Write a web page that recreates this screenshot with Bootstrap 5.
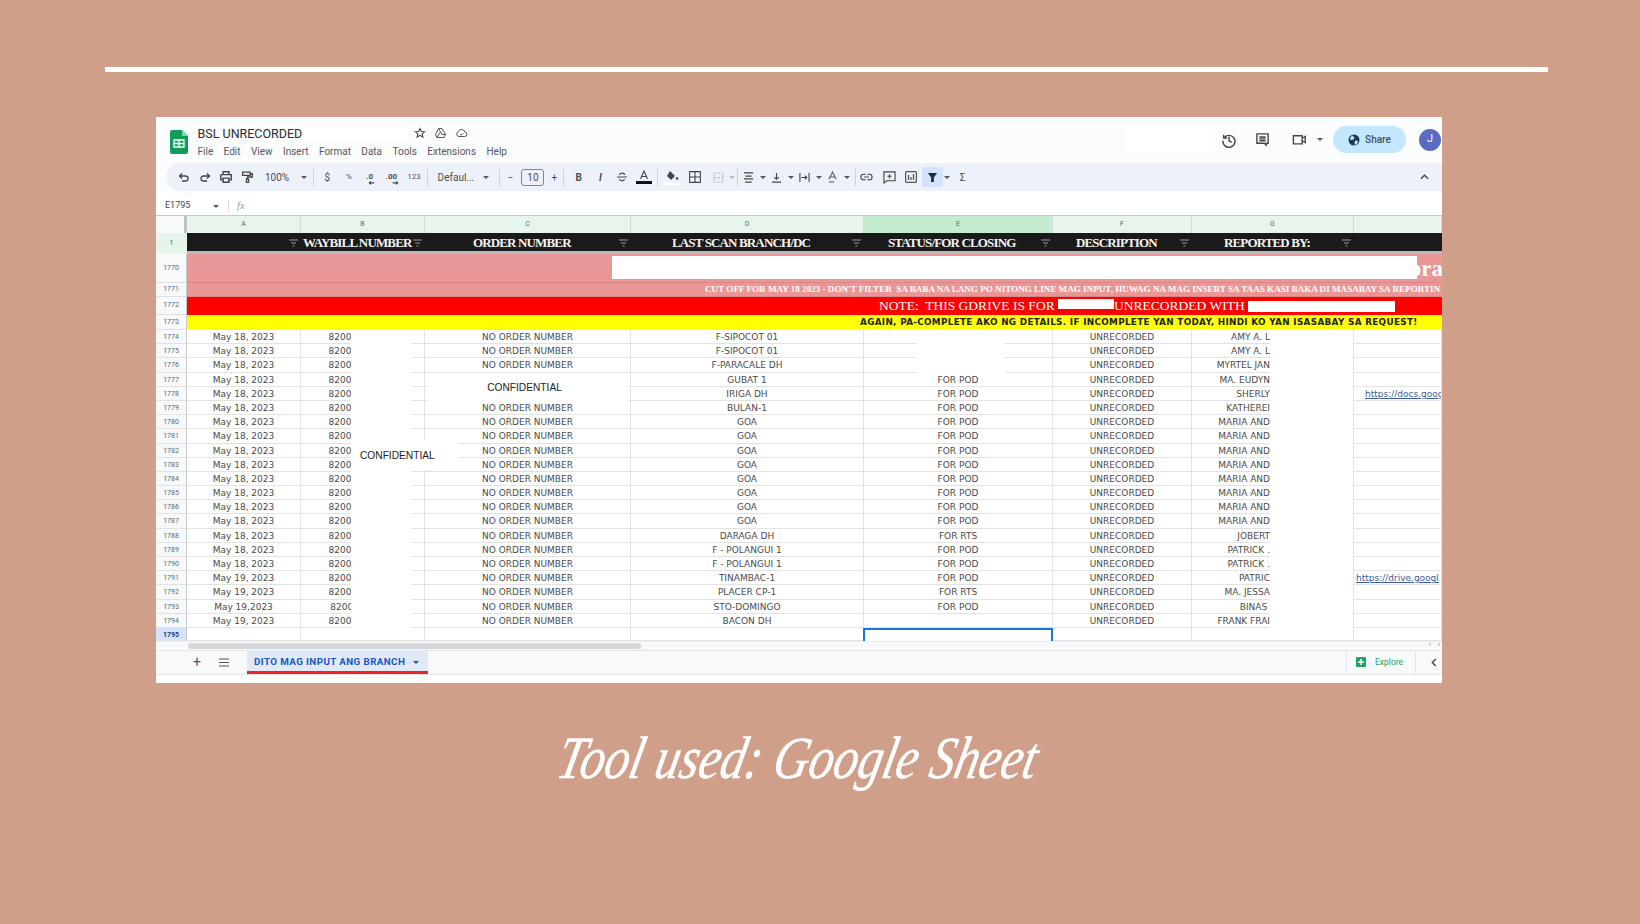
<!doctype html>
<html lang="en">
<head>
<meta charset="utf-8">
<title>Tool used: Google Sheet</title>
<link href="https://cdn.jsdelivr.net/npm/bootstrap@5.3.0/dist/css/bootstrap.min.css" rel="stylesheet">
<style>
html,body{height:100%}
body{background:#d09f89;width:1640px;height:924px;overflow:hidden;font-family:Roboto,"Liberation Sans",sans-serif;color:#3c4043}
.rule{height:5px;background:#fff;margin:67px 92px 0 105px}
.frame{width:1286px;height:566px;margin:45px 0 0 156px;background:#fff;overflow:hidden;font-size:10px}
.topbar{height:46px;background:#fafcfe;padding:13px 0 0 14px}
.logo{width:18px;height:24px;flex:none}
.titles{margin-left:9.5px;margin-top:-5px}
.doc-title{font-size:12.5px;line-height:15px;color:#2b2d30;height:16px}
.title-hide{width:106px;height:13px;background:#fff;margin-left:1px}
.star-set{gap:8px;margin-left:5px}
.menu-row{gap:10.4px;font-size:10px;line-height:14px;color:#55585c;margin-top:4px}
.top-right{margin-top:-4px}
.hide-box{width:88px;height:24px;background:#fff}
.share-pill{width:73px;height:27px;border-radius:14px;background:#c2e7ff;color:#3d5566;font-size:10px;gap:5px;font-weight:500;margin-left:11px}
.avatar-dot{width:22px;height:22px;border-radius:50%;background:#5b6ac2;color:#fff;font-size:11px;margin-left:13px;margin-right:1px;flex:none}
.toolwrap{background:#fafcfe;padding-left:10px;height:28px}
.toolpill{height:28px;background:#edf2fa;border-radius:14px 0 0 14px;padding-left:7.5px;color:#4a4d51}
.tb{flex:none;height:100%;display:flex;align-items:center;justify-content:center;white-space:nowrap}
.i{width:21.7px}
.w5{width:5px}.w6{width:6px}.w8{width:8px}.w9{width:9px}.w10{width:10px}.w11{width:11px}.w12{width:12px}.w14{width:14px}.w16{width:16px}.w17{width:17px}.w18{width:18px}.w19{width:21px}.w22{width:22px}.w23{width:23px}.w28{width:28px}.w36{width:36px}.w38{width:38px}.w39{width:39px}.w50{width:50px}
.sep::before{content:"";width:1px;height:17px;background:#cdd2d9}
.tri{width:0;height:0;border-left:3px solid transparent;border-right:3px solid transparent;border-top:3px solid #55585c;flex:none}
.tri.pale{border-top-color:#b9bcc0}
.tiny{font-size:8px;color:#55585c}
.sizebox{width:23px;height:17px;margin:0 4.5px 0 8.5px;border:1px solid #80868b;border-radius:3px;font-size:10px;flex:none}
.filter-on{width:20.5px;height:20px;background:#d3e3fd;margin-left:4.5px;border-radius:2px;flex:none}
.stack-dec{font-size:8px;font-weight:700}
.stack-dec svg{margin:8px 0 0 -5px;flex:none}
.collapse-up{margin-left:auto;margin-right:13px}
.fxbar{height:24px;background:#fff;font-size:9px;color:#444;padding-top:6px}
.cellref{width:57px;padding-left:9px}
.fx-sep{width:1px;height:12px;background:#dadce0;margin:0 8px 0 9px}
.fx-mark{font-family:"Liberation Serif",serif;font-style:italic;color:#9aa0a6;font-size:10.5px}
.sh-row{display:grid;grid-template-columns:31px 114px 124px 206px 233px 189px 139px 162px 88px}
.col-heads{height:18px;border-top:1px solid #c6c8ca;font-size:7px;color:#666;background:#e7f5ec}
.col-heads>div{display:flex;align-items:center;justify-content:center;border-right:1px solid #d4dcd7}
.col-heads>div:first-child{background:#f8f9fa;border-right:3px solid #bdc1c6}
.col-heads>div.col-active{background:#c3ecd1}
.head-row{height:21px;background:#1a1a1a;border-bottom:3px solid #b9bbbd;color:#f3f3f3;font-family:"Liberation Serif",serif;font-weight:700;font-size:13px;letter-spacing:-.86px}
.head-row>div{display:flex;align-items:center;justify-content:space-between;padding-right:3px;padding-bottom:1px;white-space:nowrap;min-width:0}
.head-row>div:first-child{background:#e6f4ea;color:#555;font:7px Roboto,sans-serif;letter-spacing:0;justify-content:center;padding:0}
.head-row>div:nth-child(2){justify-content:flex-end}
.ph2{padding-left:2px}.ph49{padding-left:48px}.ph42{padding-left:41px}.ph24{padding-left:24px}.ph23{padding-left:23px}.ph32{padding-left:32px}
.filt{width:9px;height:8px;flex:none}
.band{display:flex;overflow:hidden}
.rowno{width:31px;flex:none;background:#f8f9fa;border-right:1px solid #c8cacc;border-bottom:1px solid #e0e0e0;display:flex;align-items:center;justify-content:center;font-size:7px;color:#666}
.band-body{flex:1;min-width:0;position:relative;display:flex;align-items:center;overflow:hidden;white-space:nowrap;font-family:"Liberation Serif",serif;color:#fff}
.b1770{height:29px}.b1770 .band-body{background:#e99696;justify-content:flex-end;font-weight:700;font-size:23px;line-height:1;border-bottom:1px solid #e08585}
.b1770 .clipped-end{margin-right:-1px;padding-top:1px}
.hide-wide{position:absolute;left:425px;top:2px;width:805px;height:23px;background:#fff}
.b1771{height:14px}.b1771 .band-body{background:#e99696;padding-left:518px;font-weight:700;font-size:9.1px;border-bottom:1px solid #e08585}
.b1772{height:18px}.b1772 .band-body{background:#f00;padding-left:692px;font-size:13.5px}
.red-a{width:56px;height:10px;background:#fff;margin-top:-4px;flex:none}
.red-b{width:147px;height:11px;background:#fff;margin-left:3px;flex:none}
.b1773{height:15px}.b1773 .band-body{background:#ff0;padding-left:673px;color:#222;font:700 8.8px "DejaVu Sans",sans-serif;letter-spacing:.33px;border-bottom:1px solid #e5e5e5}
.data-wrap{position:relative;font:9px "DejaVu Sans",sans-serif;color:#4a4a4a}
.d-row{height:14.2px;line-height:14px;text-align:center;white-space:nowrap}
.d-row>div{border-right:1px solid #e3e3e3;border-bottom:1px solid #e3e3e3;min-width:0;overflow:hidden}
.d-row>div:first-child{background:#f8f9fa;font:7px/14px Roboto,sans-serif;color:#666;border-right-color:#c8cacc}
.d-row>div:nth-child(3){text-align:left;padding-left:27.5px}
.d-row>div:nth-child(8){text-align:right;padding-right:83px}
.d-row>div:nth-child(9){text-align:left;overflow:hidden}
.d-row a{color:#3c5a9a;text-decoration:underline}
.lnk-a{padding-left:11px}.lnk-b{padding-left:2px}
.blank-row{height:13px}
.blank-row>div:first-child{background:#d3e3fd;font-weight:700;color:#1b3a6b}
.sel-cell{border:2px solid #1a73e8!important;border-bottom:0!important;margin-left:-1px}
.over{position:absolute;background:#fff}
.ov-1{left:195px;top:0;width:61px;height:298px}
.ov-2{left:195px;top:110px;width:108px;height:30px;padding-left:9px}
.ov-3{left:272px;top:43px;width:200px;height:28px;padding-right:7px}
.ov-4{left:760px;top:0;width:89px;height:43px}
.ov-5{left:1114px;top:0;width:83px;height:298px}
.conf{font:10.2px "Liberation Sans",sans-serif;color:#222}
.scrolltrack{height:9px;background:#f8f9fa;padding-left:32px;border-top:1px solid #eceef0}
.thumb{width:453px;height:6px;background:#d5d7da;border-radius:3px}
.sc-arrows{margin-left:auto;gap:7px;font-size:7px;line-height:7px;color:#777;padding-right:2px}
.tabbar{height:25px;background:#f8f9fa;border-top:1px solid #e3e5e7;border-bottom:1px solid #e3e5e7}
.tab-plus{width:26px;margin-left:28px;font-size:14px;color:#555}
.tab-lines{width:28px}
.sheet-tab{width:181px;height:24px;margin-left:9px;background:#e1e9f7;border-bottom:3px solid #e8232a;color:#1a56c4;font-size:9.8px;font-weight:700;padding:3px 0 0 7px;gap:8px;letter-spacing:.4px}
.sheet-tab .tri{border-top-color:#1a56c4}
.explore{margin-left:auto;width:70px;height:100%;border-left:1px solid #e3e5e7;border-right:1px solid #e3e5e7;color:#1ea362;font-size:8.5px;gap:9px;padding-left:9px}
.side-chev{width:26px;padding-left:10px}
.bottom-strip{height:9px;background:#fff}
.caption{margin:35px 0 0 559px;color:#fff;font:italic 400 49px/80px "Liberation Serif",serif;transform:skewX(-12deg) scaleY(1.22);transform-origin:left center;white-space:nowrap;-webkit-text-stroke:.4px #fff}
</style>
</head>
<body>
<svg width="0" height="0" class="position-absolute">
  <symbol id="flt" viewBox="0 0 9 8"><path d="M0 1h9M2 4h5M3.5 7h2" stroke="#9a9a9a" stroke-width="1.1" fill="none"/></symbol>
</svg>

<div class="rule"></div>

<div class="frame">
  <div class="topbar d-flex">
    <svg class="logo" viewBox="0 0 18 24"><path d="M2 0h10l6 6v16a2 2 0 0 1-2 2H2a2 2 0 0 1-2-2V2a2 2 0 0 1 2-2z" fill="#0f9d58"/><path d="M12 0l6 6h-6z" fill="#87ceac"/><path d="M4 10h10v7H4zM4 13.5h10M9 10v7" fill="none" stroke="#fff" stroke-width="1.3"/></svg>
    <div class="titles">
      <div class="d-flex align-items-center doc-title">
        <span>BSL UNRECORDED</span><span class="title-hide"></span>
        <span class="d-flex align-items-center star-set">
          <svg width="12" height="12" viewBox="0 0 24 24" fill="none" stroke="#444" stroke-width="2.2"><path d="M12 3l2.7 6 6.3.6-4.8 4.2 1.5 6.4L12 16.8l-5.7 3.4 1.5-6.4L3 9.6 9.3 9z"/></svg>
          <svg width="13" height="12" viewBox="0 0 24 24" fill="none" stroke="#555" stroke-width="2"><path d="M8 3h7l7 12-3 6H5l-3-6zM8 3l7 12h6M5 21l6-10"/></svg>
          <svg width="13" height="12" viewBox="0 0 24 24" fill="none" stroke="#555" stroke-width="2"><path d="M7 19a5 5 0 0 1-1-9.8A6.5 6.5 0 0 1 18.5 10 4.5 4.5 0 0 1 18 19zM9 14l2.5 2.500 4-4"/></svg>
        </span>
      </div>
      <div class="d-flex menu-row"><span>File</span><span>Edit</span><span>View</span><span>Insert</span><span>Format</span><span>Data</span><span>Tools</span><span>Extensions</span><span>Help</span></div>
    </div>
    <div class="top-right ms-auto d-flex align-items-center align-self-start">
      <div class="hide-box"></div>
      <div class="tb w28"><svg width="16" height="16" viewBox="0 0 24 24" fill="none" stroke="#444" stroke-width="2.2"><path d="M4 4v5h5M4.500 9A9 9 0 1 1 3 13M12 7v6l4 2.500"/></svg></div>
      <div class="tb w38"><svg width="15" height="15" viewBox="0 0 24 24" fill="none" stroke="#444" stroke-width="2.2"><path d="M3 3h18v15h-3v3l-3-3H3zM7 8h10M7 11h10M7 14h10"/></svg></div>
      <div class="tb w36"><svg width="16" height="15" viewBox="0 0 24 24" fill="none" stroke="#444" stroke-width="2.2"><path d="M3 6h14v13H3zM17 10l5-3v10l-5-3"/></svg></div>
      <div class="tb w5"><span class="tri"></span></div>
      <div class="share-pill d-flex align-items-center justify-content-center">
        <svg width="12" height="12" viewBox="0 0 24 24"><circle cx="12" cy="12" r="11" fill="#1f3a4d"/><path d="M8 3l5 4-2 4-6 1-1-4zM14 13l6 1-2 6-5 2z" fill="#c2e7ff"/></svg>
        <span>Share</span>
      </div>
      <div class="avatar-dot d-flex align-items-center justify-content-center">J</div>
    </div>
  </div>

  <div class="toolwrap">
    <div class="toolpill d-flex align-items-center">
      <div class="tb w19"><svg width="12" height="12" viewBox="0 0 24 24" fill="none" stroke="#444" stroke-width="2.600"><path d="M8 5L3 10l5 5M3 10h12a5 5 0 0 1 0 10H8"/></svg></div>
      <div class="tb w19"><svg width="12" height="12" viewBox="0 0 24 24" fill="none" stroke="#444" stroke-width="2.600"><path d="M16 5l5 5-5 5M21 10H9a5 5 0 0 0 0 10h7"/></svg></div>
      <div class="tb w19"><svg width="14" height="14" viewBox="0 0 24 24" fill="none" stroke="#444" stroke-width="2.400"><path d="M7 8V3h10v5M3 8h18v9h-4M7 17H3V8M7 14h10v7H7z"/></svg></div>
      <div class="tb w19"><svg width="13" height="14" viewBox="0 0 24 24" fill="none" stroke="#444" stroke-width="2.400"><path d="M3 3h14v6H3zM17 6h4v6h-9v4M10 16h4v6h-4z"/></svg></div>
      <div class="tb w39">100%</div>
      <div class="tb w14"><span class="tri"></span></div>
      <div class="tb w6 sep"></div>
      <div class="tb i">$</div>
      <div class="tb i tiny">%</div>
      <div class="tb i stack-dec">.0<svg width="7" height="7" viewBox="0 0 10 10" fill="none" stroke="#444" stroke-width="1.600"><path d="M9 7H2M4 5L2 7l2 2"/></svg></div>
      <div class="tb i stack-dec">.00<svg width="7" height="7" viewBox="0 0 10 10" fill="none" stroke="#444" stroke-width="1.600"><path d="M1 7h7M6 5l2 2-2 2"/></svg></div>
      <div class="tb i tiny">123</div>
      <div class="tb w6 sep"></div>
      <div class="tb w50">Defaul...</div>
      <div class="tb w10"><span class="tri"></span></div>
      <div class="tb w17 sep"></div>
      <div class="tb w5">&minus;</div>
      <div class="sizebox d-flex align-items-center justify-content-center">10</div>
      <div class="tb w11">+</div>
      <div class="tb w8 sep"></div>
      <div class="tb i fw-bold">B</div>
      <div class="tb i fst-italic fw-bold">I</div>
      <div class="tb i"><svg width="12" height="12" viewBox="0 0 24 24" fill="none" stroke="#444" stroke-width="2.200"><path d="M2 12h20M7 8c0-5 10-5 10 0M7 16c1 5 9 5 10 0"/></svg></div>
      <div class="tb i"><svg width="16" height="14" viewBox="0 0 16 14"><path d="M4.500 9L8 1l3.500 8M5.700 6.500h4.600" fill="none" stroke="#444" stroke-width="1.100"/><rect y="11" width="16" height="3" fill="#111"/></svg></div>
      <div class="tb w6 sep"></div>
      <div class="tb w23"><svg width="16" height="15" viewBox="0 0 16 15"><path d="M6 1l5 5-4 4-4-4z" fill="#444"/><circle cx="13" cy="8.500" r="1.300" fill="#444"/><rect y="12.500" width="16" height="2.500" fill="#fff"/></svg></div>
      <div class="tb w23"><svg width="12" height="12" viewBox="0 0 12 12" fill="none" stroke="#444" stroke-width="1.100"><path d="M.6.600h10.800v10.800H.6zM6 .6v10.800M.6 6h10.800"/></svg></div>
      <div class="tb w23"><svg width="11" height="11" viewBox="0 0 12 12" fill="none" stroke="#b5b8bc" stroke-width="1.100" stroke-dasharray="2.500 1.500"><path d="M1 1h10v10H1zM1 6h10"/></svg></div>
      <div class="tb w5"><span class="tri pale"></span></div>
      <div class="tb w6 sep"></div>
      <div class="tb w16"><svg width="11" height="11" viewBox="0 0 12 12" stroke="#444" stroke-width="1.300"><path d="M1 1h10M2.500 4.500h7M1 7.500h10M2.500 11h7"/></svg></div><div class="tb w12"><span class="tri"></span></div>
      <div class="tb w16"><svg width="11" height="11" viewBox="0 0 12 12" fill="none" stroke="#444" stroke-width="1.200"><path d="M1 11h10M6 1v7M3.500 5.500L6 8l2.500-2.500"/></svg></div><div class="tb w12"><span class="tri"></span></div>
      <div class="tb w16"><svg width="11" height="11" viewBox="0 0 12 12" fill="none" stroke="#444" stroke-width="1.200"><path d="M1 1v10M11 1v10M2.500 6h6M6.500 4l2 2-2 2"/></svg></div><div class="tb w12"><span class="tri"></span></div>
      <div class="tb w16"><svg width="11" height="13" viewBox="0 0 12 14" fill="none" stroke="#555" stroke-width="1.100"><path d="M2 9L6 1l4 8M3.400 6.500h5.200M2 12h6"/></svg></div><div class="tb w12"><span class="tri"></span></div>
      <div class="tb w5 sep"></div>
      <div class="tb w18"><svg width="13" height="8" viewBox="0 0 16 10" fill="none" stroke="#444" stroke-width="1.400"><path d="M7 1.500H4.500a3.500 3.500 0 0 0 0 7H7M9 1.500h2.500a3.500 3.500 0 0 1 0 7H9M5 5h6"/></svg></div>
      <div class="tb w28"><svg width="13" height="13" viewBox="0 0 14 14" fill="none" stroke="#444" stroke-width="1.200"><path d="M1 1h12v9.500H4L1 13zM7 3.500v4.500M4.800 5.700h4.400"/></svg></div>
      <div class="tb w14"><svg width="12" height="12" viewBox="0 0 12 12"><rect x=".6" y=".6" width="10.800" height="10.800" rx="1" fill="none" stroke="#555" stroke-width="1.200"/><path d="M3.500 4v5M6 6v3M8.500 3v6" stroke="#555" stroke-width="1.300"/></svg></div>
      <div class="filter-on d-flex align-items-center justify-content-center"><svg width="11" height="11" viewBox="0 0 12 12"><path d="M1 1h10L7.500 6v5h-3V6z" fill="#1c2a44"/></svg></div>
      <div class="tb w9"><span class="tri"></span></div>
      <div class="tb w22">&Sigma;</div>
      <div class="collapse-up d-flex"><svg width="9" height="6" viewBox="0 0 10 6" fill="none" stroke="#444" stroke-width="1.400"><path d="M1 5l4-4 4 4"/></svg></div>
    </div>
  </div>

  <div class="fxbar d-flex align-items-center">
    <div class="cellref">E1795</div>
    <span class="tri"></span>
    <span class="fx-sep"></span>
    <span class="fx-mark">fx</span>
  </div>

  <div class="sh-row col-heads"><div></div><div>A</div><div>B</div><div>C</div><div>D</div><div class="col-active">E</div><div>F</div><div>G</div><div></div></div>

  <div class="sh-row head-row">
    <div>1</div>
    <div><svg class="filt"><use href="#flt"/></svg></div>
    <div class="ph2"><span>WAYBILL NUMBER</span><svg class="filt"><use href="#flt"/></svg></div>
    <div class="ph49"><span>ORDER NUMBER</span><svg class="filt"><use href="#flt"/></svg></div>
    <div class="ph42"><span>LAST SCAN BRANCH/DC</span><svg class="filt"><use href="#flt"/></svg></div>
    <div class="ph24"><span>STATUS/FOR CLOSING</span><svg class="filt"><use href="#flt"/></svg></div>
    <div class="ph23"><span>DESCRIPTION</span><svg class="filt"><use href="#flt"/></svg></div>
    <div class="ph32"><span>REPORTED BY:</span><svg class="filt"><use href="#flt"/></svg></div>
    <div></div>
  </div>

  <div class="band b1770"><div class="rowno">1770</div><div class="band-body"><span class="hide-wide"></span><span class="clipped-end">ora</span></div></div>
  <div class="band b1771"><div class="rowno">1771</div><div class="band-body">CUT OFF FOR MAY 18 2023 - DON'T FILTER&nbsp; SA BABA NA LANG PO NITONG LINE MAG INPUT, HUWAG NA MAG INSERT SA TAAS KASI BAKA DI MASABAY SA REPORTIN</div></div>
  <div class="band b1772"><div class="rowno">1772</div><div class="band-body"><span>NOTE:&nbsp; THIS GDRIVE IS FOR&nbsp;</span><span class="red-a"></span><span>UNRECORDED WITH</span><span class="red-b"></span></div></div>
  <div class="band b1773"><div class="rowno">1773</div><div class="band-body">AGAIN, PA-COMPLETE AKO NG DETAILS. IF INCOMPLETE YAN TODAY, HINDI KO YAN ISASABAY SA REQUEST!</div></div>

  <div class="data-wrap">
    <div class="sh-row d-row"><div>1774</div><div>May 18, 2023</div><div>8200</div><div>NO ORDER NUMBER</div><div>F-SIPOCOT 01</div><div></div><div>UNRECORDED</div><div>AMY A. L</div><div></div></div>
    <div class="sh-row d-row"><div>1775</div><div>May 18, 2023</div><div>8200</div><div>NO ORDER NUMBER</div><div>F-SIPOCOT 01</div><div></div><div>UNRECORDED</div><div>AMY A. L</div><div></div></div>
    <div class="sh-row d-row"><div>1776</div><div>May 18, 2023</div><div>8200</div><div>NO ORDER NUMBER</div><div>F-PARACALE DH</div><div></div><div>UNRECORDED</div><div>MYRTEL JAN</div><div></div></div>
    <div class="sh-row d-row"><div>1777</div><div>May 18, 2023</div><div>8200</div><div></div><div>GUBAT 1</div><div>FOR POD</div><div>UNRECORDED</div><div>MA. EUDYN</div><div></div></div>
    <div class="sh-row d-row"><div>1778</div><div>May 18, 2023</div><div>8200</div><div></div><div>IRIGA DH</div><div>FOR POD</div><div>UNRECORDED</div><div>SHERLY</div><div class="lnk-a"><a href="#">https://docs.goog</a></div></div>
    <div class="sh-row d-row"><div>1779</div><div>May 18, 2023</div><div>8200</div><div>NO ORDER NUMBER</div><div>BULAN-1</div><div>FOR POD</div><div>UNRECORDED</div><div>KATHEREI</div><div></div></div>
    <div class="sh-row d-row"><div>1780</div><div>May 18, 2023</div><div>8200</div><div>NO ORDER NUMBER</div><div>GOA</div><div>FOR POD</div><div>UNRECORDED</div><div>MARIA AND</div><div></div></div>
    <div class="sh-row d-row"><div>1781</div><div>May 18, 2023</div><div>8200</div><div>NO ORDER NUMBER</div><div>GOA</div><div>FOR POD</div><div>UNRECORDED</div><div>MARIA AND</div><div></div></div>
    <div class="sh-row d-row"><div>1782</div><div>May 18, 2023</div><div>8200</div><div>NO ORDER NUMBER</div><div>GOA</div><div>FOR POD</div><div>UNRECORDED</div><div>MARIA AND</div><div></div></div>
    <div class="sh-row d-row"><div>1783</div><div>May 18, 2023</div><div>8200</div><div>NO ORDER NUMBER</div><div>GOA</div><div>FOR POD</div><div>UNRECORDED</div><div>MARIA AND</div><div></div></div>
    <div class="sh-row d-row"><div>1784</div><div>May 18, 2023</div><div>8200</div><div>NO ORDER NUMBER</div><div>GOA</div><div>FOR POD</div><div>UNRECORDED</div><div>MARIA AND</div><div></div></div>
    <div class="sh-row d-row"><div>1785</div><div>May 18, 2023</div><div>8200</div><div>NO ORDER NUMBER</div><div>GOA</div><div>FOR POD</div><div>UNRECORDED</div><div>MARIA AND</div><div></div></div>
    <div class="sh-row d-row"><div>1786</div><div>May 18, 2023</div><div>8200</div><div>NO ORDER NUMBER</div><div>GOA</div><div>FOR POD</div><div>UNRECORDED</div><div>MARIA AND</div><div></div></div>
    <div class="sh-row d-row"><div>1787</div><div>May 18, 2023</div><div>8200</div><div>NO ORDER NUMBER</div><div>GOA</div><div>FOR POD</div><div>UNRECORDED</div><div>MARIA AND</div><div></div></div>
    <div class="sh-row d-row"><div>1788</div><div>May 18, 2023</div><div>8200</div><div>NO ORDER NUMBER</div><div>DARAGA DH</div><div>FOR RTS</div><div>UNRECORDED</div><div>JOBERT</div><div></div></div>
    <div class="sh-row d-row"><div>1789</div><div>May 18, 2023</div><div>8200</div><div>NO ORDER NUMBER</div><div>F - POLANGUI 1</div><div>FOR POD</div><div>UNRECORDED</div><div>PATRICK .</div><div></div></div>
    <div class="sh-row d-row"><div>1790</div><div>May 18, 2023</div><div>8200</div><div>NO ORDER NUMBER</div><div>F - POLANGUI 1</div><div>FOR POD</div><div>UNRECORDED</div><div>PATRICK .</div><div></div></div>
    <div class="sh-row d-row"><div>1791</div><div>May 19, 2023</div><div>8200</div><div>NO ORDER NUMBER</div><div>TINAMBAC-1</div><div>FOR POD</div><div>UNRECORDED</div><div>PATRIC</div><div class="lnk-b"><a href="#">https://drive.googl</a></div></div>
    <div class="sh-row d-row"><div>1792</div><div>May 19, 2023</div><div>8200</div><div>NO ORDER NUMBER</div><div>PLACER CP-1</div><div>FOR RTS</div><div>UNRECORDED</div><div>MA. JESSA</div><div></div></div>
    <div class="sh-row d-row"><div>1793</div><div>May 19,2023</div><div>&thinsp;82000</div><div>NO ORDER NUMBER</div><div>STO-DOMINGO</div><div>FOR POD</div><div>UNRECORDED</div><div>BINAS&nbsp;</div><div></div></div>
    <div class="sh-row d-row"><div>1794</div><div>May 19, 2023</div><div>8200</div><div>NO ORDER NUMBER</div><div>BACON DH</div><div></div><div>UNRECORDED</div><div>FRANK FRAI</div><div></div></div>
    <div class="sh-row d-row blank-row"><div>1795</div><div></div><div></div><div></div><div></div><div class="sel-cell"></div><div></div><div></div><div></div></div>

    <div class="over ov-1"></div>
    <div class="over ov-5"></div>
    <div class="over ov-4"></div>
    <div class="over ov-2 d-flex align-items-center"><span class="conf">CONFIDENTIAL</span></div>
    <div class="over ov-3 d-flex align-items-center justify-content-center"><span class="conf">CONFIDENTIAL</span></div>
  </div>

  <div class="scrolltrack d-flex align-items-center">
    <div class="thumb"></div>
    <div class="sc-arrows d-flex"><span>&#8249;</span><span>&#8250;</span></div>
  </div>

  <div class="tabbar d-flex align-items-center">
    <div class="tab-plus text-center">+</div>
    <div class="tab-lines d-flex justify-content-center"><svg width="10" height="9" viewBox="0 0 10 9" stroke="#555" stroke-width="1.200"><path d="M0 1h10M0 4.500h10M0 8h10"/></svg></div>
    <div class="sheet-tab d-flex align-items-center"><span>DITO MAG INPUT ANG BRANCH</span><span class="tri"></span></div>
    <div class="explore d-flex align-items-center">
      <svg width="10" height="11" viewBox="0 0 10 11"><rect width="10" height="10" rx="1" fill="#1ea362"/><path d="M5 2v6M2 5h6" stroke="#fff" stroke-width="1.500"/></svg>
      <span>Explore</span>
    </div>
    <div class="side-chev d-flex justify-content-center"><svg width="6" height="9" viewBox="0 0 6 10" fill="none" stroke="#444" stroke-width="1.500"><path d="M5 1L1 5l4 4"/></svg></div>
  </div>
  <div class="bottom-strip"></div>
</div>

<div class="caption">Tool used: Google Sheet</div>

<script src="https://cdn.jsdelivr.net/npm/bootstrap@5.3.0/dist/js/bootstrap.bundle.min.js"></script>
</body>
</html>
